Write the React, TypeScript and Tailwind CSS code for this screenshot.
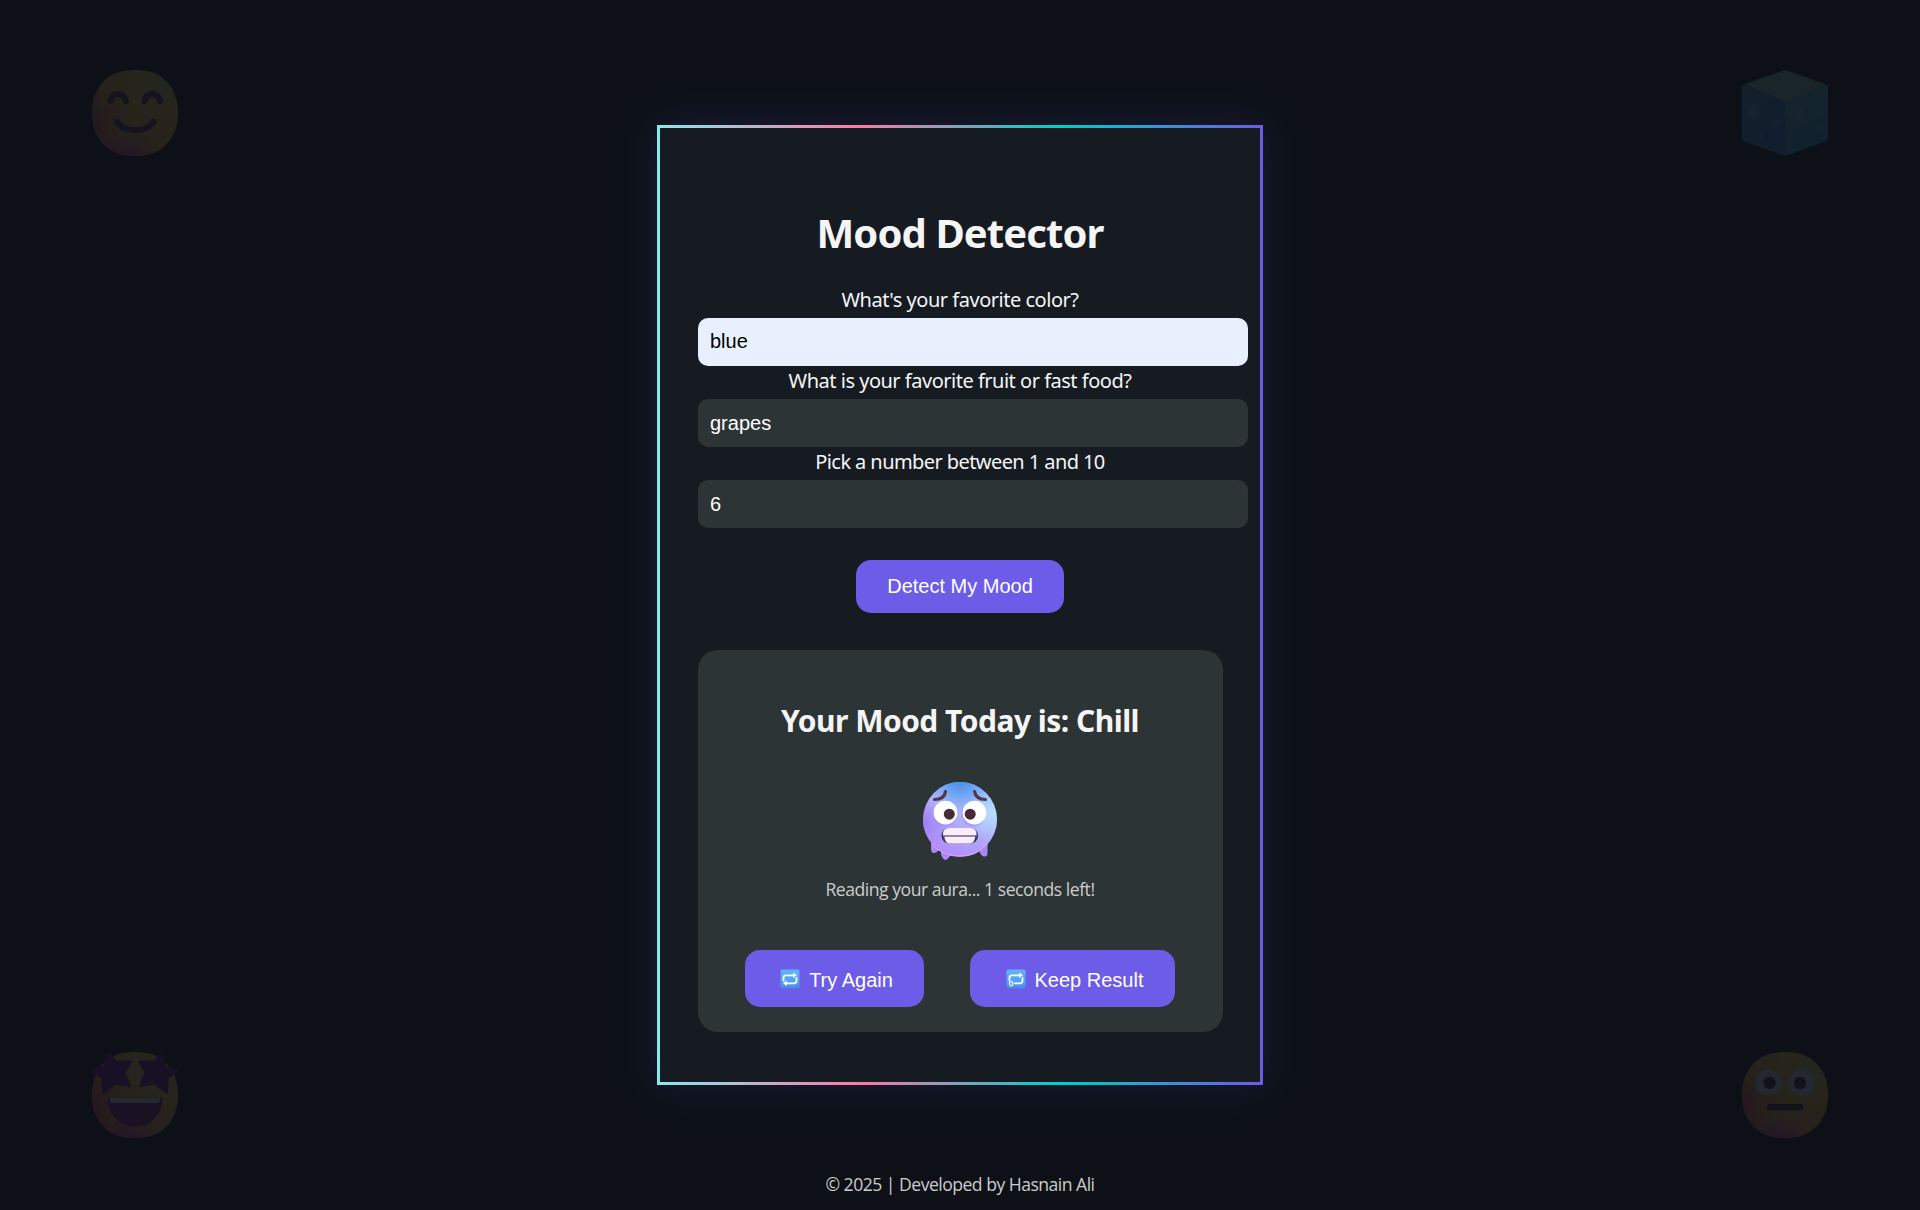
import type { ReactNode } from 'react';

function FaceGradients({ id }: { id: string }) {
  return (
    <defs>
      <radialGradient id={`${id}-base`} cx="0.8" cy="0.18" r="0.95">
        <stop offset="0" stopColor="#b9c25a" />
        <stop offset="0.3" stopColor="#dcae40" />
        <stop offset="0.75" stopColor="#dd9638" />
        <stop offset="1" stopColor="#c9604f" />
      </radialGradient>
      <radialGradient id={`${id}-left`} cx="0.06" cy="0.58" r="0.34">
        <stop offset="0" stopColor="#c8485c" stopOpacity="0.75" />
        <stop offset="1" stopColor="#c8485c" stopOpacity="0" />
      </radialGradient>
      <radialGradient id={`${id}-bottom`} cx="0.42" cy="1.06" r="0.36">
        <stop offset="0" stopColor="#b03cb8" stopOpacity="0.8" />
        <stop offset="1" stopColor="#b03cb8" stopOpacity="0" />
      </radialGradient>
    </defs>
  );
}

const facePath =
  'M43 0C58 0 68 4 75 12C82.500 20 86 31 86 43C86 56 82 67 74 75C66.500 82.500 57 86 43 86C29 86 19.500 82.500 12 75C4 67 0 56 0 43C0 31 3.500 20 11 12C18 4 28 0 43 0Z';

function YellowFace({ id, children }: { id: string; children: ReactNode }) {
  return (
    <svg viewBox="0 0 86 86" className="size-[86px] opacity-[0.12]">
      <FaceGradients id={id} />
      <path d={facePath} fill={`url(#${id}-base)`} />
      <path d={facePath} fill={`url(#${id}-left)`} />
      <path d={facePath} fill={`url(#${id}-bottom)`} />
      {children}
    </svg>
  );
}

function SmilingFace() {
  return (
    <YellowFace id="smile">
      <g fill="none" stroke="#442a52" strokeWidth="6" strokeLinecap="round">
        <path d="M18.500 31C21 21.500 31.500 21.500 34 31" />
        <path d="M52.500 31C55 21.500 65.500 21.500 68 31" />
        <path d="M24.500 51.500C31 63 55 63 61.500 51.500" />
      </g>
    </YellowFace>
  );
}

function StarStruck() {
  return (
    <YellowFace id="star">
      <g fill="#6a1690" stroke="#6a1690" strokeWidth="3" strokeLinejoin="round">
        <path d="M16.500 2L23.500 10L38.500 10L32 20L37 33.500L23.500 31L11.500 40L11 26L1.500 18.500L13 15Z" />
        <path d="M69.500 2L62.500 10L47.500 10L54 20L49 33.500L62.500 31L74.500 40L75 26L84.500 18.500L73 15Z" />
      </g>
      <path d="M15.500 45.500H70.500C70.500 63 59 74.500 43 74.500C27 74.500 15.500 63 15.500 45.500Z" fill="#7a1270" />
      <path d="M18 45.500H68V48.500Q68 51 65.500 51H20.500Q18 51 18 48.500Z" fill="#c9ccec" />
    </YellowFace>
  );
}

function FlatFace() {
  return (
    <YellowFace id="flat">
      <circle cx="26" cy="30.500" r="13" fill="#c3c6da" />
      <circle cx="60" cy="30.500" r="13" fill="#c3c6da" />
      <circle cx="27.500" cy="31" r="6.200" fill="#2f1d35" />
      <circle cx="58" cy="31" r="6.200" fill="#2f1d35" />
      <rect x="24.500" y="52" width="37" height="6.500" rx="3.200" fill="#2f1d35" />
    </YellowFace>
  );
}

function IceCube() {
  return (
    <svg viewBox="0 0 86 86" className="size-[86px] opacity-[0.12]">
      <defs>
        <linearGradient id="ice-left" x1="0" y1="0" x2="0.6" y2="1">
          <stop offset="0" stopColor="#3a8fc4" />
          <stop offset="1" stopColor="#2e7cce" />
        </linearGradient>
        <linearGradient id="ice-right" x1="0" y1="0" x2="0.3" y2="1">
          <stop offset="0" stopColor="#55b4bc" />
          <stop offset="1" stopColor="#2f8fd0" />
        </linearGradient>
      </defs>
      <path d="M40 1Q43 -0.500 46 1L83 14L43 32L3 14Z" fill="#70b4ae" />
      <path d="M3 14L43 31V86L3 71.500Q0 70 0 67V17Q0 15 3 14Z" fill="url(#ice-left)" />
      <path d="M83 14L43 31V86L83 71.500Q86 70 86 67V17Q86 15 83 14Z" fill="url(#ice-right)" />
      <g fill="#a0c4cc" fillOpacity="0.3">
        <path d="M13 31Q19 40 18 45Q16 50 11 49Q5 47 6 41Q8 36 13 31Z" />
        <path d="M58 35Q63 44 62 48Q60 53 56 51Q51 48 52 43Q54 38 58 35Z" />
        <circle cx="33" cy="52" r="3" />
        <circle cx="20" cy="66" r="3" />
        <circle cx="76" cy="58" r="3" />
      </g>
    </svg>
  );
}

function ColdFace() {
  return (
    <svg viewBox="0 0 74 78" className="mt-[42px] h-[78px] w-[74px]">
      <defs>
        <linearGradient id="cold-base" x1="0.75" y1="0.1" x2="0.3" y2="1">
          <stop offset="0" stopColor="#93c0fc" />
          <stop offset="0.45" stopColor="#b2b0fb" />
          <stop offset="1" stopColor="#b18afb" />
        </linearGradient>
        <radialGradient id="cold-top" cx="0.5" cy="-0.06" r="0.46">
          <stop offset="0" stopColor="#3f86dd" />
          <stop offset="0.4" stopColor="#5d9bf0" stopOpacity="0.9" />
          <stop offset="1" stopColor="#6fa6f8" stopOpacity="0" />
        </radialGradient>
        <radialGradient id="cold-right" cx="0.95" cy="0.42" r="0.36">
          <stop offset="0" stopColor="#b5defe" />
          <stop offset="1" stopColor="#b5defe" stopOpacity="0" />
        </radialGradient>
        <radialGradient id="cold-left" cx="0" cy="0.55" r="0.35">
          <stop offset="0" stopColor="#a080f2" />
          <stop offset="1" stopColor="#a080f2" stopOpacity="0" />
        </radialGradient>
      </defs>
      <path
        d="M8 60V67Q8 71 11 71Q14 71 14.500 69L18 68.500V72Q19 77 22.500 78Q25 77.500 26.500 74.500L30 72L56 68Q58 74.500 61 74.500Q64.500 75 64.500 71V59Z"
        fill="#ac86f7"
      />
      <ellipse cx="37" cy="37.500" rx="37" ry="37.500" fill="url(#cold-base)" />
      <ellipse cx="37" cy="37.500" rx="37" ry="37.500" fill="url(#cold-right)" />
      <ellipse cx="37" cy="37.500" rx="37" ry="37.500" fill="url(#cold-left)" />
      <ellipse cx="37" cy="37.500" rx="37" ry="37.500" fill="url(#cold-top)" />
      <path d="M9 62C22 78 51 78 64 62" fill="none" stroke="#e0a0f4" strokeWidth="1" />
      <ellipse cx="22.500" cy="32.500" rx="12" ry="12" fill="#9088ee" fillOpacity="0.45" />
      <ellipse cx="50.500" cy="32.500" rx="12" ry="12" fill="#9088ee" fillOpacity="0.45" />
      <circle cx="22.500" cy="30.700" r="11.900" fill="#fff" />
      <circle cx="51.500" cy="30.700" r="11.900" fill="#fff" />
      <circle cx="26.300" cy="32.200" r="5.500" fill="#472a38" />
      <circle cx="47.200" cy="32.200" r="5.500" fill="#472a38" />
      <g fill="none" stroke="#57344e" strokeWidth="3.200" strokeLinecap="round">
        <path d="M22.500 9.500Q21.500 17.500 11.500 17.500" />
        <path d="M51.500 9.500Q53 17.500 62.500 17.500" />
      </g>
      <rect x="18.500" y="46" width="36.500" height="15.500" rx="7.500" fill="#37385f" />
      <path d="M20 52.500Q20 46 26 46H47.500Q53.500 46 53.500 52.500V53.500H20Z" fill="#fbecfc" />
      <path d="M21.500 54.500H52V56Q51 61.500 46.500 61.500H27Q22.500 61.500 21.500 56Z" fill="#fbecfc" />
      <path d="M20 53.900H53.500" stroke="#8d839c" strokeWidth="1" />
    </svg>
  );
}

function LoopIcon({ once = false }: { once?: boolean }) {
  return (
    <svg viewBox="0 0 20 20" className="mr-[9px] ml-[4px] size-5">
      <defs>
        <linearGradient id="loop-bg" x1="0" y1="0" x2="0" y2="1">
          <stop offset="0" stopColor="#62b4fb" />
          <stop offset="0.75" stopColor="#4f9df4" />
          <stop offset="1" stopColor="#4a86dc" />
        </linearGradient>
      </defs>
      <rect x="0.500" y="0.500" width="19" height="19" rx="1.800" fill="url(#loop-bg)" />
      <g fill="none" stroke="#fff" strokeWidth="1.800" strokeLinecap="round">
        <path d="M3.500 11.500V8.500Q3.500 6.300 6 6.300H13.500" />
        {once ? (
          <path d="M16.500 8.800V11.500Q16.500 14.300 14 14.300H8.800" />
        ) : (
          <path d="M16.500 8.800V11.500Q16.500 14.300 14 14.300H6.500" />
        )}
      </g>
      <path d="M13.200 3.600L16.900 6.300L13.200 9Z" fill="#fff" />
      {once ? (
        <ellipse cx="5.200" cy="14.800" rx="1.700" ry="2.100" fill="#4f9df4" stroke="#e9f3ff" strokeWidth="1.200" />
      ) : (
        <path d="M6.800 11.600L3.100 14.300L6.800 17Z" fill="#fff" />
      )}
    </svg>
  );
}

const fieldClass =
  'block h-12 w-[550px] rounded-[10px] px-3 font-["Liberation_Sans",Arial,sans-serif] text-xl leading-6 outline-none';
const labelClass = 'h-[33px] pt-px text-center font-["Noto_Sans",sans-serif] text-xl leading-7';
const buttonClass =
  'flex items-center justify-center rounded-[15px] bg-[#6c5ce7] font-["Liberation_Sans",Arial,sans-serif] text-xl text-white';

export default function App() {
  return (
    <div className="relative flex h-[1210px] flex-col items-center overflow-hidden bg-[#0d1117] pt-[125px] font-['Open_Sans',sans-serif] text-[#f5f5f5]">
      <div className="absolute top-[70px] left-[92px]"><SmilingFace /></div>
      <div className="absolute top-[70px] right-[92px]"><IceCube /></div>
      <div className="absolute top-[1052px] left-[92px]"><StarStruck /></div>
      <div className="absolute top-[1052px] right-[92px]"><FlatFace /></div>

      <div className="relative h-[960px] w-[606px] shrink-0 bg-[linear-gradient(90deg,#81ecec,#fd79a8,#00cec9,#6c5ce7)] p-[3px] shadow-[0_0_40px_rgba(108,92,231,0.16)]">
        <main className="flex h-full flex-col bg-[#161b22] px-[38px] pt-[81px]">
          <h1 className="text-center font-['Noto_Sans',sans-serif] text-[40px] leading-[48px] font-bold tracking-[-0.9px]">
            Mood Detector
          </h1>
          <form className="mt-7 flex flex-col">
            <label className={`${labelClass} tracking-[-0.48px]`}>What's your favorite color?</label>
            <input className={`${fieldClass} bg-[#e8f0fe] pb-0.5 text-black`} defaultValue="blue" />
            <label className={`${labelClass} tracking-[-0.49px]`}>What is your favorite fruit or fast food?</label>
            <input className={`${fieldClass} bg-[#2d3436] text-white`} defaultValue="grapes" />
            <label className={`${labelClass} tracking-[-0.58px]`}>Pick a number between 1 and 10</label>
            <input className={`${fieldClass} bg-[#2d3436] text-white`} defaultValue="6" />
            <button type="button" className={`${buttonClass} mt-8 h-[53px] w-52 self-center pb-0.5`}>
              Detect My Mood
            </button>
          </form>

          <section className="mt-[37px] flex h-[382px] w-[525px] flex-col items-center rounded-[20px] bg-[#2d3436] pt-[51px] pr-px">
            <h2 className="font-['Noto_Sans',sans-serif] text-3xl leading-10 font-bold tracking-[-0.52px]">
              Your Mood Today is: Chill
            </h2>
            <div className="-mt-px">
              <ColdFace />
            </div>
            <p className="mt-[17px] text-[17.6px] leading-6 tracking-[-0.47px] text-[#cccccc]">
              Reading your aura... 1 seconds left!
            </p>
            <div className="mt-[49px] flex gap-[46px]">
              <button type="button" className={`${buttonClass} h-[57px] w-[179px]`}>
                <LoopIcon />
                <span className="pt-0.5">Try Again</span>
              </button>
              <button type="button" className={`${buttonClass} h-[57px] w-[205px]`}>
                <LoopIcon once />
                <span className="pt-0.5">Keep Result</span>
              </button>
            </div>
          </section>
        </main>
      </div>

      <footer className="mt-[87px] text-[17.6px] leading-6 tracking-[-0.52px] text-[#cccccc]">
        © 2025 | Developed by Hasnain Ali
      </footer>
    </div>
  );
}
